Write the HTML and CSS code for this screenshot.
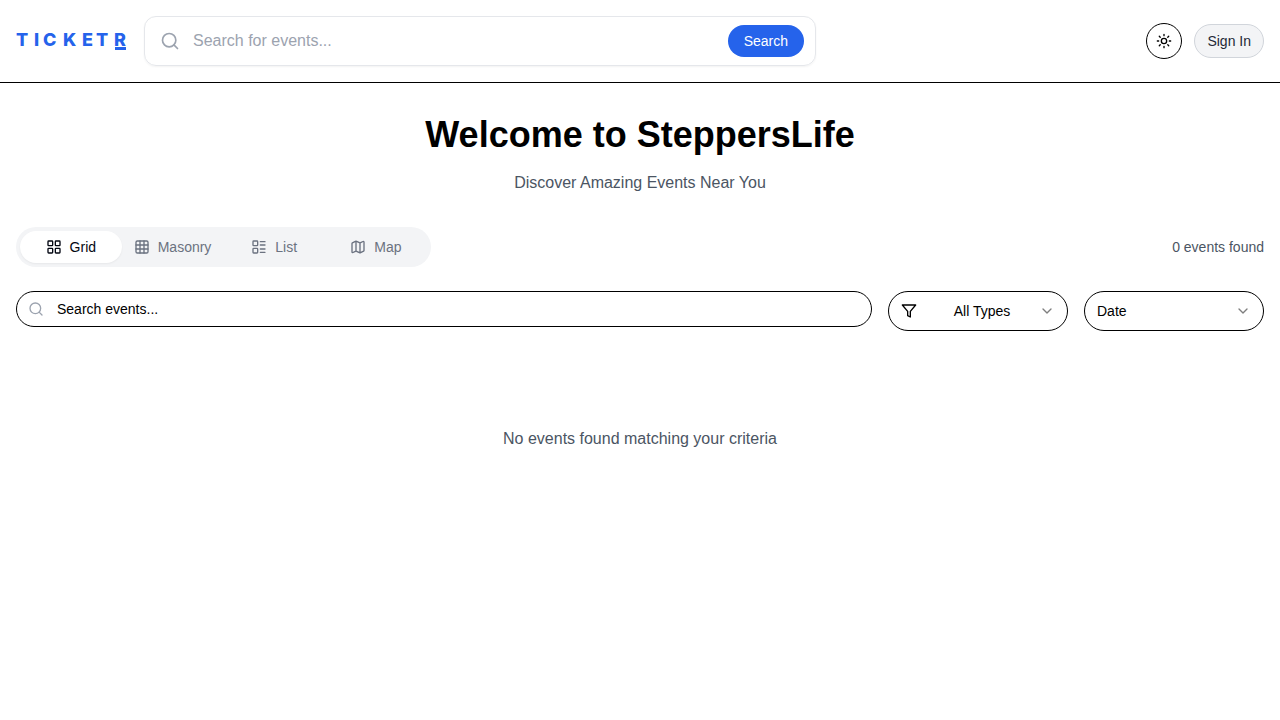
FILE: index.html
```html
<!DOCTYPE html>
<html lang="en">
<head>
<meta charset="utf-8">
<meta name="viewport" content="width=device-width, initial-scale=1">
<title>SteppersLife</title>
<link rel="stylesheet" href="styles.css">
</head>
<body>
<header class="header">
  <a class="logo" href="#" aria-label="Ticketr">
    <svg width="112" height="24" viewBox="0 0 112 24" fill="currentColor">
      <text class="logo-text" y="17" x="0 18 27 47 66 80 98">TICKETR</text>
      <rect x="99" y="18" width="11" height="3"/>
    </svg>
  </a>
  <form class="site-search">
    <svg class="icon icon-lg muted" viewBox="0 0 24 24"><circle cx="11" cy="11" r="8"/><path d="m21 21-4.3-4.3"/></svg>
    <input class="site-input" type="text" placeholder="Search for events..." aria-label="Search for events">
    <button class="search-btn" type="button">Search</button>
  </form>
  <div class="actions">
    <button class="theme-btn" type="button" aria-label="Toggle theme">
      <svg class="icon" viewBox="0 0 24 24"><circle cx="12" cy="12" r="4"/><path d="M12 2v2M12 20v2M4.93 4.93l1.41 1.41M17.66 17.66l1.41 1.41M2 12h2M20 12h2M6.34 17.66l-1.41 1.41M19.07 4.93l-1.41 1.41"/></svg>
    </button>
    <button class="sign-in" type="button">Sign In</button>
  </div>
</header>
<main class="main">
  <div class="intro">
    <h1 class="title">Welcome to SteppersLife</h1>
    <p class="subtitle">Discover Amazing Events Near You</p>
  </div>
  <div class="view-row">
    <div class="tabs" role="tablist">
      <button class="tab tab-active" type="button" role="tab" aria-selected="true">
        <svg class="icon" viewBox="0 0 24 24"><rect width="7" height="7" x="3" y="3" rx="1"/><rect width="7" height="7" x="14" y="3" rx="1"/><rect width="7" height="7" x="14" y="14" rx="1"/><rect width="7" height="7" x="3" y="14" rx="1"/></svg>Grid</button>
      <button class="tab" type="button" role="tab" aria-selected="false">
        <svg class="icon" viewBox="0 0 24 24"><rect width="18" height="18" x="3" y="3" rx="2"/><path d="M3 9h18M3 15h18M9 3v18M15 3v18"/></svg>Masonry</button>
      <button class="tab" type="button" role="tab" aria-selected="false">
        <svg class="icon" viewBox="0 0 24 24"><rect width="7" height="7" x="3" y="3" rx="1"/><rect width="7" height="7" x="3" y="14" rx="1"/><path d="M14 4h7M14 9h7M14 15h7M14 20h7"/></svg>List</button>
      <button class="tab" type="button" role="tab" aria-selected="false">
        <svg class="icon" viewBox="0 0 24 24"><path d="M14.106 5.553a2 2 0 0 0 1.788 0l3.659-1.83A1 1 0 0 1 21 4.619v12.764a1 1 0 0 1-.553.894l-4.553 2.277a2 2 0 0 1-1.788 0l-4.212-2.106a2 2 0 0 0-1.788 0l-3.659 1.83A1 1 0 0 1 3 19.381V6.618a1 1 0 0 1 .553-.894l4.553-2.277a2 2 0 0 1 1.788 0zM15 5.764v15M9 3.236v15"/></svg>Map</button>
    </div>
    <p class="count">0 events found</p>
  </div>
  <div class="filters">
    <label class="event-search">
      <svg class="icon muted" viewBox="0 0 24 24"><circle cx="11" cy="11" r="8"/><path d="m21 21-4.3-4.3"/></svg>
      <input class="event-input" type="text" placeholder="Search events..." aria-label="Search events">
    </label>
    <div class="picker">
      <select class="select select-types" aria-label="Event type"><option>All Types</option></select>
      <svg class="icon picker-lead" viewBox="0 0 24 24"><path d="M22 3H2l8 9.46V19l4 2v-8.54z"/></svg>
      <svg class="icon chevron" viewBox="0 0 24 24"><path d="m6 9 6 6 6-6"/></svg>
    </div>
    <div class="picker">
      <select class="select" aria-label="Sort by"><option>Date</option></select>
      <svg class="icon chevron" viewBox="0 0 24 24"><path d="m6 9 6 6 6-6"/></svg>
    </div>
  </div>
  <p class="empty">No events found matching your criteria</p>
</main>
</body>
</html>
```
FILE: styles.css
```css
* { box-sizing: border-box; }
body {
  margin: 0;
  background: #fff;
  color: #000;
  font-family: "Liberation Sans", Arial, sans-serif;
  font-size: 16px;
  line-height: 24px;
}
h1, p { margin: 0; }
button, input, select { font: inherit; color: inherit; margin: 0; }
button { cursor: pointer; }
svg { display: block; flex: none; }
.icon {
  width: 16px;
  height: 16px;
  fill: none;
  stroke: currentColor;
  stroke-width: 2;
  stroke-linecap: round;
  stroke-linejoin: round;
}
.icon-lg { width: 20px; height: 20px; }
.muted { color: #9ca3af; }

.header {
  display: flex;
  align-items: center;
  gap: 16px;
  padding: 16px;
  border-bottom: 1px solid #000;
}
.logo { color: #2563eb; }
.logo-text { font-family: Inter, sans-serif; font-size: 18px; font-weight: 800; }
.site-search {
  flex: 1;
  max-width: 672px;
  display: flex;
  align-items: center;
  gap: 13px;
  height: 50px;
  padding: 0 11px 0 15px;
  border: 1px solid #e5e7eb;
  border-radius: 12px;
  box-shadow: 0 1px 2px rgba(0, 0, 0, 0.05);
}
.site-input {
  flex: 1;
  min-width: 0;
  height: 48px;
  padding: 0;
  border: 0;
  outline: 0;
  background: none;
}
.site-input::placeholder { color: #9ca3af; opacity: 1; }
.search-btn {
  height: 32px;
  padding: 0 16px;
  border: 0;
  border-radius: 16px;
  background: #2563eb;
  color: #fff;
  font-size: 14px;
}
.actions { display: flex; align-items: center; gap: 12px; margin-left: auto; }
.theme-btn {
  display: grid;
  place-items: center;
  width: 36px;
  height: 36px;
  padding: 0;
  border: 1px solid #000;
  border-radius: 50%;
  background: #fff;
}
.sign-in {
  height: 34px;
  padding: 0 12px;
  border: 1px solid #d1d5db;
  border-radius: 17px;
  background: #f3f4f6;
  color: #1f2937;
  font-size: 14px;
}

.main { padding: 32px 16px; }
.intro { text-align: center; }
.title { font-size: 36px; line-height: 40px; font-weight: 700; }
.subtitle { margin-top: 16px; color: #4b5563; }
.view-row {
  display: flex;
  justify-content: space-between;
  align-items: center;
  margin-top: 32px;
}
.tabs {
  display: grid;
  grid-template-columns: repeat(4, 1fr);
  padding: 4px;
  border-radius: 20px;
  background: #f3f4f6;
}
.tab {
  display: flex;
  align-items: center;
  justify-content: center;
  gap: 8px;
  height: 32px;
  padding: 0 12px;
  border: 0;
  border-radius: 16px;
  background: none;
  color: #6b7280;
  font-size: 14px;
}
.tab-active {
  background: #fff;
  color: #030712;
  box-shadow: 0 1px 2px rgba(0, 0, 0, 0.05);
}
.count { color: #4b5563; font-size: 14px; }
.filters {
  display: flex;
  align-items: flex-start;
  gap: 16px;
  margin-top: 24px;
  font-size: 14px;
}
.event-search {
  flex: 1;
  display: flex;
  align-items: center;
  gap: 13px;
  height: 36px;
  padding: 0 11px;
  border: 1px solid #000;
  border-radius: 18px;
}
.event-input {
  flex: 1;
  min-width: 0;
  padding: 0;
  border: 0;
  outline: 0;
  background: none;
}
.event-input::placeholder { color: #000; opacity: 1; }
.picker { display: grid; align-items: center; width: 180px; }
.picker > * { grid-area: 1 / 1; }
.select {
  appearance: none;
  width: 100%;
  height: 40px;
  padding: 0 36px 0 12px;
  border: 1px solid #000;
  border-radius: 20px;
  background: #fff;
}
.select-types { padding-left: 44px; text-align-last: center; }
.picker-lead { margin-left: 13px; pointer-events: none; }
.chevron { justify-self: end; margin-right: 13px; opacity: 0.5; pointer-events: none; }
.empty { margin-top: 96px; text-align: center; color: #4b5563; }
```
